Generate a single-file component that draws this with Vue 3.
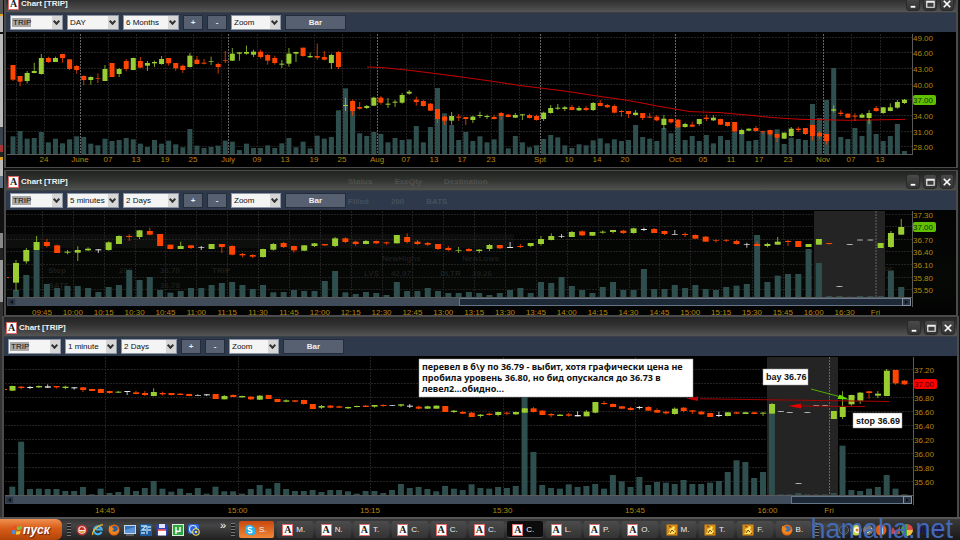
<script setup>
// Candle rows: kind (r/g/w), high, body top, body bottom, low, volume top.
// Readings use a grid three times finer than the chart's own units.
const STEP = 3

const dayRows = `r 195 195 239 243 409|r 228 228 245 259 393|g 213 219 243 250 416|g 188 213 219 220 414|g 162 174 222 224 396|r 170 174 186 189 427|g 170 174 186 186 416|r 162 162 174 188 430|r 178 178 207 210 418|r 195 198 210 221 409|r 226 228 240 256 411|g 229 231 240 254 431|r 220 234 236 249 436|g 195 207 243 243 416|r 189 189 231 231 423|g 204 207 222 231 420|r 177 183 207 214 414|g 173 174 210 210 418|r 171 183 203 204 431|g 183 189 197 213 441|g 182 186 190 201 420|g 168 177 192 194 431|r 174 174 190 197 422|r 189 189 205 212 433|r 194 197 210 219 442|g 159 167 201 203 387|r 168 179 192 193 437|r 177 188 191 193 444|g 170 183 185 195 441|r 188 192 201 221 437|r 153 180 182 189 422|g 144 161 182 183 425|g 156 157 161 182 450|g 137 156 161 164 431|g 149 155 164 171 444|r 149 155 171 176 444|r 162 165 182 194 436|r 167 174 189 194 444|g 180 191 194 204 430|g 144 161 191 200 414|g 155 156 161 186 442|r 143 143 168 170 425|g 158 168 172 173 445|r 131 168 173 179 407|r 153 171 179 181 416|g 161 165 189 207 411|r 153 156 201 207 331|g 293 315 318 333 265|r 299 303 333 347 331|r 306 321 326 329 400|g 315 318 324 327 408|g 290 293 317 318 396|r 288 293 308 314 402|g 294 311 314 324 427|g 300 305 308 321 414|g 279 285 308 311 420|g 270 275 281 284 418|r 290 299 306 317 378|r 299 303 318 320 427|r 309 311 332 333 381|r 327 327 357 369 264|r 347 350 362 374 340|g 336 348 362 374 375|r 342 350 353 363 420|r 351 351 357 375 396|g 347 350 360 369 423|g 335 345 348 354 409|g 344 348 351 357 427|r 345 351 357 358 418|r 336 339 348 360 347|r 342 344 351 352 445|g 339 345 353 354 408|g 342 343 346 360 427|r 342 345 354 355 442|r 344 348 360 362 436|g 335 338 357 363 417|g 315 324 339 341 405|g 312 323 326 330 412|g 318 322 327 333 436|r 315 321 330 331 444|g 318 324 331 333 433|r 318 324 330 333 436|g 306 309 330 333 421|r 300 309 318 319 415|r 312 315 322 324 430|r 314 318 338 340 418|r 330 333 336 350 423|r 333 333 342 354 420|g 330 338 345 347 375|r 339 339 354 360 411|r 339 350 353 354 416|r 345 350 361 364 423|g 345 356 375 387 384|r 356 357 367 371 400|r 357 359 382 383 381|g 368 372 381 383 420|r 365 374 380 381 408|g 357 357 372 377 423|r 344 353 357 363 405|g 346 353 361 363 430|r 356 357 374 375 408|r 366 366 378 380 420|r 366 366 394 396 394|g 386 390 402 404 396|g 385 386 392 393 423|r 378 384 393 395 420|r 392 393 395 402 394|r 389 390 403 407 392|r 401 402 413 426 388|g 398 398 416 417 432|g 381 386 408 410 413|r 381 386 390 396 417|r 384 384 402 405 420|r 374 375 408 422 312|r 393 398 409 417 354|r 402 402 423 434 300|g 316 328 332 338 204|r 330 338 342 348 411|r 340 341 353 354 417|r 340 347 350 363 384|g 339 344 353 354 408|g 330 339 354 372 360|r 318 324 333 335 402|g 321 322 339 342 423|g 310 322 333 334 408|g 300 306 323 326 372|g 297 299 309 312 453`

const fiveRows = `g 270 279 338 362 360|g 234 240 274 281 315|g 198 216 240 240 240|r 207 216 228 232 342|r 224 226 249 249 354|g 240 245 248 253 348|g 229 240 248 273 348|g 232 236 241 243 354|w 237 238 241 249 366|g 214 217 240 242 351|g 196 198 222 222 345|r 192 198 201 213 300|g 180 181 201 207 330|r 173 183 194 196 321|r 192 192 228 228 360|r 224 224 237 238 368|g 215 228 237 237 363|r 225 226 234 237 354|w 228 232 234 240 354|g 222 222 237 237 345|r 222 222 231 249 339|r 226 228 254 256 336|r 249 252 256 262 345|r 253 255 260 264 357|g 236 237 261 263 345|g 219 222 239 242 367|r 216 219 231 234 366|r 227 228 241 248 360|g 225 226 242 243 363|g 219 220 228 231 363|r 222 222 226 228 333|g 201 205 228 231 303|r 202 205 216 219 367|r 212 215 222 227 372|g 210 213 222 223 366|r 212 213 220 222 369|r 215 217 220 224 375|g 195 195 220 220 336|r 190 201 216 220 363|r 210 215 222 225 363|r 216 219 224 228 354|r 222 222 237 240 363|r 228 234 240 243 369|g 231 240 242 249 369|r 234 237 243 245 366|g 237 239 243 249 369|g 222 225 237 243 375|r 225 225 235 237 369|w 216 231 234 234 360|r 222 228 231 234 354|g 219 219 228 231 369|g 198 207 222 227 336|g 190 198 210 211 339|w 192 198 200 204 321|g 183 186 201 201 348|r 181 184 196 198 360|g 186 186 197 198 369|g 181 185 188 191 351|g 180 180 186 190 336|r 180 182 189 192 360|g 173 175 189 191 360|w 173 177 180 183 297|r 174 177 189 189 357|r 182 183 192 195 357|w 180 192 194 194 345|r 187 192 195 201 354|r 193 195 206 206 345|r 198 200 215 215 357|r 208 210 212 218 360|r 207 210 212 216 351|r 210 213 222 224 347|w 218 223 225 233 342|r 214 222 228 228 195|g 218 222 228 232 336|g 201 215 224 224 317|r 210 213 216 228 312|r 213 213 231 231 312|g 222 222 231 231 237|g 207 207 224 224 279|r 219 219 222 224 378|w 348 348 350 350 378|w 222 222 224 224 380|w 209 209 211 211 378|w 209 209 211 211 378|g 219 219 234 234 378|g 183 189 231 234 302|g 147 171 194 194 351`

const minuteRows = `g 212 213 227 227 515|r 213 215 219 224 380|w 213 216 219 222 522|g 211 213 217 219 521|w 208 214 218 219 522|r 213 213 217 220 522|g 212 215 219 223 528|w 216 217 220 224 528|r 216 217 225 231 516|r 221 222 228 228 538|r 221 222 234 234 521|r 227 228 234 236 534|g 228 230 233 234 531|w 228 228 231 240 516|r 227 232 237 238 528|r 228 234 240 243 519|g 220 231 243 244 498|r 230 234 238 241 521|r 234 234 240 241 530|r 234 236 240 240 521|r 236 237 243 243 534|w 238 240 242 242 519|w 237 238 241 243 536|r 237 237 252 252 515|g 240 243 253 253 529|r 238 240 246 246 529|g 242 243 247 248 536|r 243 245 253 255 522|g 240 242 254 255 510|r 240 240 252 252 521|r 252 252 261 262 504|g 253 256 260 262 522|r 255 256 260 262 528|r 254 255 267 269 528|r 267 267 282 282 525|g 270 273 278 282 531|r 270 272 278 280 525|r 272 274 278 279 525|g 275 276 280 282 529|g 272 273 276 277 536|r 270 272 276 276 528|g 270 270 275 278 528|r 268 270 273 275 534|w 270 271 273 273 525|g 267 268 272 276 507|w 267 272 275 279 519|r 272 275 281 283 516|g 272 274 281 282 522|g 271 272 281 281 529|r 273 273 291 291 513|g 285 287 291 294 521|r 287 291 296 297 525|r 291 293 306 306 508|g 297 299 303 308 519|r 293 296 300 302 521|g 290 291 300 304 516|r 291 293 296 301 519|g 290 291 298 300 513|g 279 280 293 294 247|r 276 280 291 293 411|r 285 287 300 300 510|r 294 297 301 307 519|g 297 299 303 303 521|r 294 298 302 305 508|w 289 300 304 304 516|g 285 290 304 304 513|g 261 261 293 295 507|r 258 264 267 270 521|r 265 267 276 277 480|r 273 274 281 282 499|r 276 279 285 286 516|w 273 276 279 283 486|r 273 276 287 287 510|r 280 285 293 294 501|r 287 290 295 299 503|g 277 281 297 299 507|r 276 278 288 292 495|r 285 286 290 297 507|r 287 290 298 300 507|r 293 294 306 306 503|w 290 300 303 306 498|g 291 292 303 304 471|r 290 292 296 297 436|g 290 292 297 297 441|r 290 292 297 298 489|g 291 293 296 303 471|g 264 267 296 296 296|w 288 288 290 290 538|w 291 291 293 293 538|w 505 505 507 507 534|w 291 291 293 293 538|w 270 270 272 272 538|w 270 270 272 272 538|g 288 288 312 312 534|g 229 276 306 312 392|g 239 240 268 272 525|g 231 233 257 267 528|r 228 229 234 251 521|g 228 236 242 249 516|g 162 167 243 243 480|r 165 165 205 209 521|r 195 197 208 210 538`

function candles(rows, start, pitch, top, width) {
  return rows.split('|').map((row, i) => {
    const [kind, ...values] = row.split(' ')
    const [high, open, close, low, volume] = values.map((v) => top + Number(v) / STEP)
    const x = (start + pitch * i) / STEP
    return { kind, x, left: x - width / 2, high, open, close, low, volume }
  })
}

const series = (first, pitch, texts) => texts.map((text, i) => ({ x: first + pitch * i, text }))
const pairs = (list) => list.split(' ').map((p) => ({ text: p.split('@')[0], x: Number(p.split('@')[1]) }))
const clock = (from, count) =>
  Array.from({ length: count }, (_, i) => {
    const m = from + i * 15
    return `${String(Math.floor(m / 60)).padStart(2, '0')}:${String(m % 60).padStart(2, '0')}`
  })
const prices = (first, pitch, texts) => texts.map((text, i) => ({ y: first + pitch * i, text }))

const windows = [
  {
    id: 'day',
    kind: 'upper first',
    interval: 'DAY',
    range: '6 Months',
    viewBox: '6 32 950 135',
    left: 7,
    top: 34,
    base: 154,
    right: 912,
    barWidth: 5,
    labelY: 162,
    candles: candles(dayRows, 39, 21.225, 0, 5),
    prices: prices(37.7, 15.65, ['49.00', '46.00', '43.00', '40.00', '37.00', '34.00', '31.00', '28.00']),
    tag: { index: 4, kind: 'up' },
    times: pairs('24@44 June@80 07@108 13@136 19@165 25@193 July@228 09@257 13@285 19@314 25@342 Aug@377 07@406 13@434 17@462 23@491 Spt@540 10@569 14@597 20@625 Oct@675 05@703 11@731 17@759 23@788 Nov@823 07@851 13@880'),
    extraGrid: [16, 73, 221, 370, 519, 653, 816],
    sessions: [80.5, 228.5, 377.5, 540.5, 675.5, 823.5],
    average: '367,67 380,67.4 407,70 435,73.5 462,77 490,81 520,85.5 540,88 568,91.5 597,96 625,100 640,102.7 657,106 675,109 690,111.6 720,112.6 750,115.3 773,117.6 800,119.3 823,119.7 847,120.3 905,119.4',
  },
  {
    id: 'five',
    kind: 'upper glass',
    interval: '5 minutes',
    range: '2 Days',
    viewBox: '6 210 950 105',
    left: 7,
    top: 211,
    base: 297,
    right: 912,
    labelY: 315,
    barWidth: 6,
    candles: candles(fiveRows, 48, 30.88, 170, 6),
    prices: prices(214.5, 12.6, ['37.30', '37.00', '36.70', '36.40', '36.10', '35.80', '35.50']),
    tag: { index: 1, kind: 'up' },
    times: series(42, 30.87, [...clock(585, 26), '16:30', 'Fri']),
    extraGrid: [],
    sessions: [876],
    shade: { x: 814, width: 71 },
    scroll: { y: 298, split: 459, end: 911 },
  },
  {
    id: 'minute',
    kind: 'lower',
    interval: '1 minute',
    range: '2 Days',
    viewBox: '4 356 953 161',
    left: 5,
    top: 357,
    base: 495,
    right: 913,
    labelY: 513,
    barWidth: 6,
    candles: candles(minuteRows, 37, 26.495, 315, 5.6),
    prices: prices(370, 14.05, ['37.20', '37.00', '36.80', '36.60', '36.40', '36.20', '36.00', '35.80', '35.60']),
    tag: { index: 1, kind: 'down' },
    times: [...series(105, 132.5, clock(885, 6)), { x: 829, text: 'Fri' }],
    extraGrid: [],
    sessions: [829.5],
    shade: { x: 767, width: 71 },
    scroll: { y: 496, split: 791, end: 912 },
    notes: true,
  },
]

// Texts of the window behind the translucent one.
const ghosts = [
  [48, 273, 'Stop'], [119, 273, '200'], [160, 273, '36.70'], [212, 273, 'TRIP'],
  [48, 288, 'BATS'], [160, 288, '36.78'],
  [382, 261, 'NewHighs'], [462, 261, 'NewLows'], [364, 276, 'LVS'], [391, 276, '42.97'], [440, 276, 'DLTR'], [472, 276, '39.26'],
  [864, 262, '10'], [845, 271, 'советов.doc'],
]

const tasks = [
  ['skype', 'S.'], ['chart', 'M.'], ['chart', 'N.'], ['chart', 'T.'], ['chart', 'C.'], ['chart', 'C.'], ['chart', 'C.'],
  ['chart', 'C.'], ['chart', 'L.'], ['chart', 'P.'], ['chart', 'O.'], ['gold', 'M.'], ['gold', 'T.'], ['gold', 'F.'], ['fox', 'B.'],
].map(([icon, text], i) => ({ icon, text, state: i === 0 ? 'alert' : i === 7 ? 'active' : '' }))
</script>

<template>
  <main class="desktop">
    <section v-for="w in windows" :key="w.id" class="window" :class="w.kind">
      <header class="titlebar">
        <span class="logo" aria-hidden="true">A</span>
        <h2 class="title">Chart [TRIP]</h2>
        <div v-if="w.id === 'five'" class="behind" aria-hidden="true"><span>Status</span><span>ExeQty</span><span>Destination</span></div>
        <div class="controls">
          <button type="button" aria-label="Minimize"><svg viewBox="0 0 13 13"><path d="M4 9.500h5" stroke="#fff" stroke-width="2" /></svg></button>
          <button type="button" aria-label="Maximize"><svg viewBox="0 0 13 13"><path d="M3 3.500h8v6.500h-8zM3 4.500h8" fill="none" stroke="#eee" stroke-width="1.300" /></svg></button>
          <button type="button" aria-label="Close"><svg viewBox="0 0 13 13"><path d="M3 3l7 7M10 3l-7 7" stroke="#fff" stroke-width="1.800" /></svg></button>
        </div>
      </header>

      <div class="toolbar">
        <span class="combo symbol"><select aria-label="Symbol"><option>TRIP</option></select></span>
        <span class="combo interval"><select aria-label="Interval"><option>{{ w.interval }}</option></select></span>
        <span class="combo range"><select aria-label="Range"><option>{{ w.range }}</option></select></span>
        <button type="button" class="tool">+</button>
        <button type="button" class="tool">-</button>
        <span class="combo zoom"><select aria-label="Zoom"><option>Zoom</option></select></span>
        <button type="button" class="tool bar">Bar</button>
        <div v-if="w.id === 'five'" class="behind" aria-hidden="true"><span>Filled</span><span>200</span><span>BATS</span></div>
      </div>

      <svg class="chart" :viewBox="w.viewBox" role="img" aria-label="Price chart TRIP">
        <g v-if="w.id === 'five'" class="ghost">
          <rect x="6" y="234" width="508" height="14" />
          <text v-for="g in ghosts" :key="g[0] + '-' + g[1]" :x="g[0]" :y="g[1]">{{ g[2] }}</text>
        </g>
        <rect v-if="w.shade" :x="w.shade.x" :y="w.top" :width="w.shade.width" :height="w.base - w.top" class="shade" />

        <g class="grid">
          <line v-for="p in w.prices" :key="p.text" :x1="w.left" :x2="w.right" :y1="Math.round(p.y) - 0.5" :y2="Math.round(p.y) - 0.5" />
          <line v-for="t in w.times" :key="t.x" :x1="Math.round(t.x) + 0.5" :x2="Math.round(t.x) + 0.5" :y1="w.top" :y2="w.base" />
          <line v-for="x in w.extraGrid" :key="'e' + x" :x1="x + 0.5" :x2="x + 0.5" :y1="w.top" :y2="w.base" />
        </g>
        <line v-for="x in w.sessions" :key="'s' + x" class="session" :x1="x" :x2="x" :y1="w.top" :y2="w.base" />

        <rect v-for="c in w.candles" :key="'v' + c.x" class="volume" :x="c.x - w.barWidth / 2" :y="c.volume" :width="w.barWidth" :height="Math.max(w.base - c.volume, 0)" />
        <polyline v-if="w.average" :points="w.average" class="average" />
        <rect v-if="w.id !== 'day'" :x="w.left" :y="w.id === 'five' ? 277 : 389" width="2" height="1" class="r" />
        <g v-for="c in w.candles" :key="c.x" :class="c.kind">
          <rect class="wick" :x="c.x - 0.5" :y="c.high" width="1" :height="c.low - c.high" />
          <rect :x="c.left" :y="c.open" :width="w.id === 'day' ? 5 : 6" :height="c.close - c.open" />
        </g>

        <path class="axis" :d="`M${w.left} ${w.base + 0.5}H${w.right}M${w.right + 0.5} ${w.top}V${w.base + (w.scroll ? 10 : 1)}`" />

        <g v-if="w.scroll">
          <rect :x="w.left" :y="w.scroll.y" :width="w.scroll.split - w.left" height="8" class="thumb" />
          <rect :x="w.scroll.split + 0.5" :y="w.scroll.y + 0.5" :width="w.scroll.end - w.scroll.split - 1" height="7" class="track" />
          <rect :x="w.left + 0.5" :y="w.scroll.y + 0.5" width="8" height="7" class="nudge" />
          <rect :x="w.scroll.end - 8.5" :y="w.scroll.y + 0.5" width="8" height="7" class="nudge bright" />
          <path :d="`M${w.left + 6} ${w.scroll.y + 2}v4l-3-2zM${w.scroll.end - 6} ${w.scroll.y + 2}v4l3-2z`" class="arrow" />
        </g>

        <g class="label">
          <template v-for="(p, i) in w.prices" :key="'p' + p.text">
            <rect v-if="i === w.tag.index" :x="w.right + 1" :y="Math.round(p.y) - 5" width="23" height="10" rx="2" :class="['tag', w.tag.kind]" />
            <text :x="w.right + 1" :y="Math.round(p.y) + 3" :class="{ tagged: i === w.tag.index }">{{ p.text }}</text>
          </template>
          <text v-for="t in w.times" :key="'t' + t.x" :x="t.x" :y="w.labelY" text-anchor="middle">{{ t.text }}</text>
        </g>

        <g v-if="w.notes" class="notes">
          <path d="M889 401.500L700 398.800" stroke="#a80000" />
          <path d="M865 406.500L795 406" stroke="#a80000" />
          <path d="M686 398.600l12-2.200v4.600z" fill="#c00000" />
          <path d="M788 406l13-2.500v5z" fill="#e00000" />
          <path d="M811 389l30 8" stroke="#4fae00" />
          <path d="M849 399.500l-9.500-5-2 4.500z" fill="#66e000" />
          <rect x="419" y="359" width="274" height="38" />
          <rect x="763" y="369" width="45" height="16" />
          <rect x="853" y="413" width="49" height="15" />
          <g class="long">
            <text x="422" y="370">перевел в б\у по 36.79 - выбит, хотя графически цена не</text>
            <text x="422" y="381">пробила уровень 36.80, но бид опускался до 36.73 в</text>
            <text x="422" y="392">левел2...обидно...</text>
          </g>
          <text x="766" y="380">bay 36.76</text>
          <text x="856" y="424">stop 36.69</text>
        </g>
      </svg>
    </section>

    <footer class="taskbar">
      <button type="button" class="start">
        <svg viewBox="0 0 12 12" aria-hidden="true"><path d="M1 3q2-2 4-1l-1 4q-2-1-4 1z" fill="#e8502a" /><path d="M6 2.500q2 1 5-.5l-1 4q-3 1-5 0z" fill="#7cc242" /><path d="M0 7.500q2-1.500 4-.5l-1 4q-2-1-4 .5z" fill="#4a90e0" /><path d="M5 7.500q2 1 4.500 0l-1 3.500q-3 1.500-4.500 .3z" fill="#f8c830" /></svg>
        <span>пуск</span>
      </button>
      <i class="grip"></i>
      <nav class="quick" aria-label="Quick launch">
        <svg viewBox="0 0 12 12"><circle cx="6" cy="6" r="5.500" fill="#b53238" /><circle cx="6" cy="6" r="3.800" fill="#f4e8dc" /><path d="M3.500 5a2.600 2.600 0 0 1 5 0v1h-5z" fill="#c03028" /><path d="M3 7h6l-1.500 2h-3z" fill="#e0a040" /></svg>
        <svg viewBox="0 0 12 12"><path d="M9.500 8a4 4 0 1 1 .3-2.500H4" fill="none" stroke="#43b4f2" stroke-width="2" /><path d="M1 11C-1 8 7 0 11 1" fill="none" stroke="#f3bd32" stroke-width="1.200" /></svg>
        <svg viewBox="0 0 12 12"><circle cx="6" cy="6" r="5.500" fill="#e56a12" /><circle cx="6.500" cy="5" r="3" fill="#315c9c" /><path d="M1 2l3 1 2 2-2 2 3 1 4-3a5 5 0 1 1-10 0z" fill="#f08a1c" /></svg>
        <svg viewBox="0 0 12 12"><rect y="1" width="12" height="9" fill="#c0d8f0" /><rect x="1" y="2" width="10" height="7" fill="#3871b8" /><path d="M1 6l10-3v6H1z" fill="#5b93d4" /><path d="M2 11h8" stroke="#888" /></svg>
        <svg viewBox="0 0 12 12"><rect width="12" height="12" fill="#1f5c9c" /><path d="M1 2h5l-4 4h4M7 2v8M8 3h3M8 6h3M1 9h4" stroke="#b8dcf4" fill="none" stroke-width="1.300" /></svg>
        <svg viewBox="0 0 12 12"><rect x=".5" y=".5" width="11" height="11" fill="#2c45b8" /><rect x="3" y="0" width="6" height="4" fill="#dce4ff" /><rect x="2" y="5.500" width="8" height="6" fill="#fff" /><path d="M2 6h8" stroke="#e03838" stroke-width="1.500" /></svg>
        <svg viewBox="0 0 12 12"><rect x=".5" y=".5" width="11" height="11" fill="#2fa640" stroke="#d8f0d8" /><path d="M4 3v7M4 3v3.500q2 2 4 0V3v5" stroke="#fff" stroke-width="1.400" fill="none" /></svg>
        <svg viewBox="0 0 12 12"><rect width="11" height="10" rx="2" fill="#2c66d8" /><circle cx="5" cy="5" r="3.500" fill="none" stroke="#cfe4ff" stroke-width="1.200" /><circle cx="8" cy="8" r="3.800" fill="#f0d848" /><circle cx="8" cy="8" r="2" fill="none" stroke="#1c44b8" stroke-width="1.300" /></svg>
      </nav>
      <span class="more">»</span>
      <i class="grip tight"></i>
      <div class="tasks">
        <button v-for="(t, i) in tasks" :key="i" type="button" class="task" :class="t.state">
          <span v-if="t.icon === 'chart'" class="logo" aria-hidden="true">A</span>
          <svg v-else-if="t.icon === 'skype'" viewBox="0 0 12 12"><path d="M1 4a4 4 0 0 1 5-3 5 5 0 0 1 5 6 3 3 0 0 1-4 4A5 5 0 0 1 1 6z" fill="#28b4ec" /><path d="M8 4q-2-1.500-4 0 0 1.500 2 2t2 2q-2 1.500-4 0" stroke="#fff" stroke-width="1.300" fill="none" /></svg>
          <svg v-else-if="t.icon === 'gold'" viewBox="0 0 12 12"><rect x=".5" y=".5" width="11" height="11" fill="#d88a14" /><path d="M2 10l2-3-1-2 3-1 1-2 2 1-1 3 2 1-2 3z" fill="#ffe468" /><path d="M4 9l2-3 2 2M3 2l2 1M9 9l1 1" stroke="#704000" fill="none" /></svg>
          <svg v-else viewBox="0 0 12 12"><circle cx="6" cy="6" r="5.500" fill="#e56a12" /><circle cx="6.500" cy="5" r="3" fill="#3f70b4" /><path d="M1 2l3 1 2 2-2 2 3 1 4-3a5 5 0 1 1-10 0z" fill="#f08a1c" /></svg>
          <span>{{ t.text }}</span>
        </button>
      </div>
      <i class="grip wide"></i>
      <div class="tray">
        <svg viewBox="0 0 80 12" aria-hidden="true"><circle cx="7" cy="6" r="4.500" fill="#333" stroke="#666" /><circle cx="19" cy="6" r="5.500" fill="#c8dc48" /><circle cx="20" cy="6" r="3" fill="#fff" /><circle cx="20" cy="6" r="1.500" fill="#e08020" /><circle cx="31" cy="6" r="5" fill="#777" /><path d="M28 6l3 3 4-5" stroke="#bfe0a0" fill="none" /><circle cx="44" cy="6" r="5.500" fill="#e05c1c" /><path d="M43 2h3v8h-3z" fill="#fff" /><path d="M52 10l4-7 3 5 4-6v8z" fill="#c04848" /><path d="M70 0a6 6 0 0 1 6 6h-6z" fill="#e04848" /><path d="M76 6a6 6 0 0 1-6 6V6z" fill="#f0c040" /><path d="M70 12a6 6 0 0 1 0-12z" fill="#40a850" /></svg>
        <time>00:15</time>
      </div>
      <span class="watermark">hamaha.net</span>
    </footer>
  </main>
</template>

<style>
body {
  background: #111;
  overflow: hidden;
}
</style>

<style scoped>
.desktop {
  display: flex;
  flex-direction: column;
  overflow: hidden;
  font-family: "Liberation Sans", Arial, sans-serif;
  font-size: 8px;
  background:
    linear-gradient(#555 0 14px, #e0a020 14px 16px, #bbb 16px 32px, #111 32px 34px, #bbb 34px 127px, #39434f 127px 145px, #a33 145px 152px, #222 152px 157px, #e0a020 157px 160px, #bbb 160px 176px, #607080 176px 188px, #111 188px 233px, #888 233px 248px, #222 248px 260px, #999 260px 302px, #333 302px) 0 0 / 3px 100% no-repeat,
    #111;
}
svg { display: block; }
button { padding: 0; font-family: inherit; font-size: 8px; }

.window {
  border: 2px solid #4b4b4b;
  border-width: 1px 2px;
  background: #000;
}
.upper { margin: 0 2px 0 4px; }
.lower { margin: 0 1px 0 2px; border-bottom: 0; }
.first { margin-top: -8px; margin-bottom: 2px; }

.titlebar {
  position: relative;
  display: flex;
  align-items: center;
  gap: 2px;
  height: 19px;
  padding: 2px 2px 0 2px;
  box-sizing: border-box;
  background: linear-gradient(#242424, #333 45%, #555);
}
.glass .titlebar { background: linear-gradient(#20231f, #30322f 45%, #505250); }
.title { margin: 0; flex: 1; color: #f0f0f0; font-size: 8px; font-weight: bold; }
.behind {
  position: absolute;
  left: 36%;
  top: 6px;
  display: flex;
  gap: 22px;
  color: rgba(255, 255, 255, .12);
  font-weight: bold;
}
.logo {
  width: 9px;
  height: 10px;
  flex: none;
  border: 1px solid #e06a6a;
  background: #fff;
  color: #222;
  font: bold 10px/10px "Liberation Serif", serif;
  text-align: center;
}
.controls { display: flex; gap: 3px; }
.controls button {
  width: 14px;
  height: 15px;
  border: 1px solid #2a2a2a;
  border-radius: 3px;
  background: linear-gradient(#4a4a4a, #333);
}
.controls svg { width: 12px; height: 12px; }

.toolbar {
  position: relative;
  display: flex;
  align-items: center;
  gap: 4px;
  height: 20px;
  padding: 0 4px;
  box-sizing: border-box;
  border-top: 1px solid #3b3f46;
  background: #2e3a4b;
}
.combo { position: relative; height: 15px; }
.combo::before {
  content: "";
  position: absolute;
  right: 1px;
  top: 1px;
  width: 10px;
  height: 13px;
  background: #d6d6d6;
  pointer-events: none;
}
.combo::after {
  content: "";
  position: absolute;
  right: 4px;
  top: 4px;
  width: 3px;
  height: 3px;
  border: solid #333;
  border-width: 0 2px 2px 0;
  transform: rotate(45deg);
  pointer-events: none;
}
.combo select {
  appearance: none;
  width: 100%;
  height: 100%;
  padding: 0 2px;
  border: 1px solid #8a94a2;
  border-radius: 0;
  background: #f4f4f4;
  color: #111;
  font: 8px/13px "Liberation Sans", sans-serif;
}
.symbol select { background: linear-gradient(#a8a8a8, #a8a8a8) 1px 2px / 19px 9px no-repeat #f4f4f4; }
.symbol { width: 53px; }
.interval { width: 52px; }
.range { width: 56px; }
.zoom { width: 50px; }
.tool {
  width: 20px;
  height: 15px;
  border: 1px solid #232c39;
  background: #566070;
  color: #f0f0f0;
  font-weight: bold;
}
.bar { width: 61px; }

.chart { width: 100%; height: auto; overflow: visible; background: #000; }
.glass .chart { background: linear-gradient(#020302, #060806 70%, #020302); }
.ghost { fill: #fff; fill-opacity: .1; font-weight: bold; }
.ghost rect { fill-opacity: .04; }
.shade { fill: #242424; }
.grid line { stroke: #222; stroke-dasharray: 2 1; }
.session { stroke: #666; stroke-dasharray: 2 1; }
.volume { fill: #2f4f4f; }
.average { fill: none; stroke: #c80000; stroke-width: 1; }
.r { fill: #ff4500; }
.g { fill: #9acd32; }
.w { fill: #e8e8e8; }
.wick { fill-opacity: .8; }
.axis { stroke: #5a5a5a; fill: none; }
.thumb { fill: #414c5b; }
.track { fill: #1e2938; stroke: #667488; }
.nudge { fill: #2b3645; stroke: #39475a; }
.bright { stroke: #8290a2; }
.arrow { fill: #0c1118; }
.label { fill: #b8860b; font: 8px "Liberation Sans", sans-serif; }
.up { fill: #60c000; }
.down { fill: #f00; }
.tagged { fill: #123000; }
.down + .tagged { fill: #400; }
.notes rect { fill: #fff; stroke: #999; stroke-width: .5; }
.notes text { font: bold 9px "Liberation Sans", sans-serif; fill: #111; }
.notes .long text { font-family: "Noto Sans", "Liberation Sans", sans-serif; }

.taskbar {
  position: relative;
  display: flex;
  align-items: center;
  height: 23px;
  border-top: 2px solid #565656;
  box-sizing: border-box;
  background: linear-gradient(#333, #444 30%, #202020);
}
.start {
  display: flex;
  align-items: center;
  justify-content: center;
  width: 62px;
  height: 21px;
  border: 0;
  border-radius: 0 6px 6px 0;
  background: linear-gradient(#f09050, #d85c18 45%, #b04408);
  color: #fff;
  font: italic bold 12px "Liberation Sans", sans-serif;
  text-shadow: 1px 1px 1px #622;
}
.start svg { width: 11px; height: 11px; }
.grip {
  width: 4px;
  height: 14px;
  margin: 0 5px;
  background: repeating-linear-gradient(#777 0 1px, #222 1px 3px);
}
.quick { display: flex; gap: 4px; }
.quick svg { width: 12px; height: 12px; }
.more {
  flex: none;
  width: 8px;
  margin-left: 20px;
  padding-bottom: 8px;
  color: #fff;
  font-size: 11px;
  line-height: 11px;
}
.tight { margin: 0 4px 0 3px; }
.tasks { flex: 1; display: flex; gap: 3px; }
.task {
  flex: 1 1 0;
  min-width: 0;
  display: flex;
  align-items: center;
  gap: 3px;
  height: 17px;
  padding: 0 5px;
  border: 0;
  border-radius: 2px;
  background: linear-gradient(#4c4c4c, #333);
  color: #eee;
}
.task svg { width: 12px; height: 12px; flex: none; }
.alert { background: linear-gradient(#c84810, #f08838); }
.active { background: #0c0c0c; box-shadow: inset 0 -1px #555; }
.wide { margin: 0 22px 0 4px; }
.tray {
  display: flex;
  align-items: center;
  width: 119px;
  height: 21px;
  background: linear-gradient(#3a3a3a, #181818);
}
.tray svg { width: 80px; height: 12px; flex: none; margin-left: -4px; }
.tray time { color: #101070; font-size: 10px; font-weight: bold; }
.watermark {
  position: absolute;
  right: 7px;
  bottom: -3px;
  color: #4569b4;
  font-size: 27px;
  line-height: 27px;
}
</style>
